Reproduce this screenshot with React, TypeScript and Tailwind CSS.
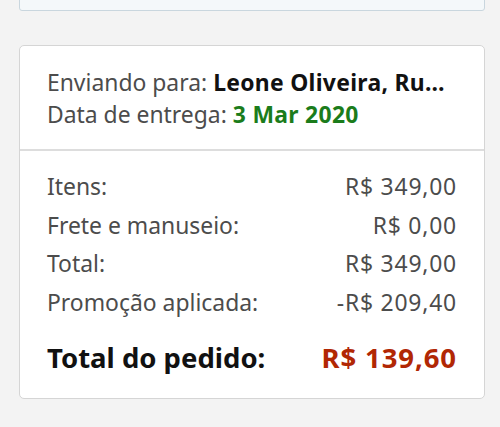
const rows = [
  { label: 'Itens:', value: 'R$ 349,00' },
  { label: 'Frete e manuseio:', value: 'R$ 0,00' },
  { label: 'Total:', value: 'R$ 349,00' },
  { label: 'Promoção aplicada:', value: '-R$ 209,40' },
];

const App = () => {
  return (
    <div className="w-[500px] h-[427px] overflow-hidden bg-[#f3f3f3] font-['Noto_Sans',sans-serif]">
      <div className="ml-[19px] mr-[15px] mt-[-40px] h-[51px] rounded-b-[3px] border border-[#c9d6de] bg-[#f4f8fa]" />

      <div className="ml-[19px] mr-[15px] mt-[34px] rounded-[5px] border border-[#d5d5d5] bg-white">
        <div className="px-[27px] pt-[21px] pb-[18px] text-[22.9px] leading-[32px] text-[#4c4c4c]">
          <p className="whitespace-nowrap">
            Enviando para: <span className="font-bold tracking-[0.3px] text-[#111]">Leone Oliveira, Ru…</span>
          </p>
          <p>
            Data de entrega: <span className="font-bold tracking-[0.3px] text-[#1b7c1b]">3 Mar 2020</span>
          </p>
        </div>

        <div className="border-t-2 border-[#dddddd] px-[27px] pt-[17px] pb-[20px]">
          {rows.map(row => (
            <div key={row.label} className="flex justify-between text-[22.9px] leading-[38.5px] text-[#4c4c4c]">
              <span>{row.label}</span>
              <span className="tracking-[0.8px]">{row.value}</span>
            </div>
          ))}
          <div className="mt-[16px] flex justify-between text-[27.5px] font-bold leading-[40px]">
            <span className="text-[#111]">Total do pedido:</span>
            <span className="tracking-[0.9px] text-[#b12704]">R$ 139,60</span>
          </div>
        </div>
      </div>
    </div>
  );
};

export default App;
